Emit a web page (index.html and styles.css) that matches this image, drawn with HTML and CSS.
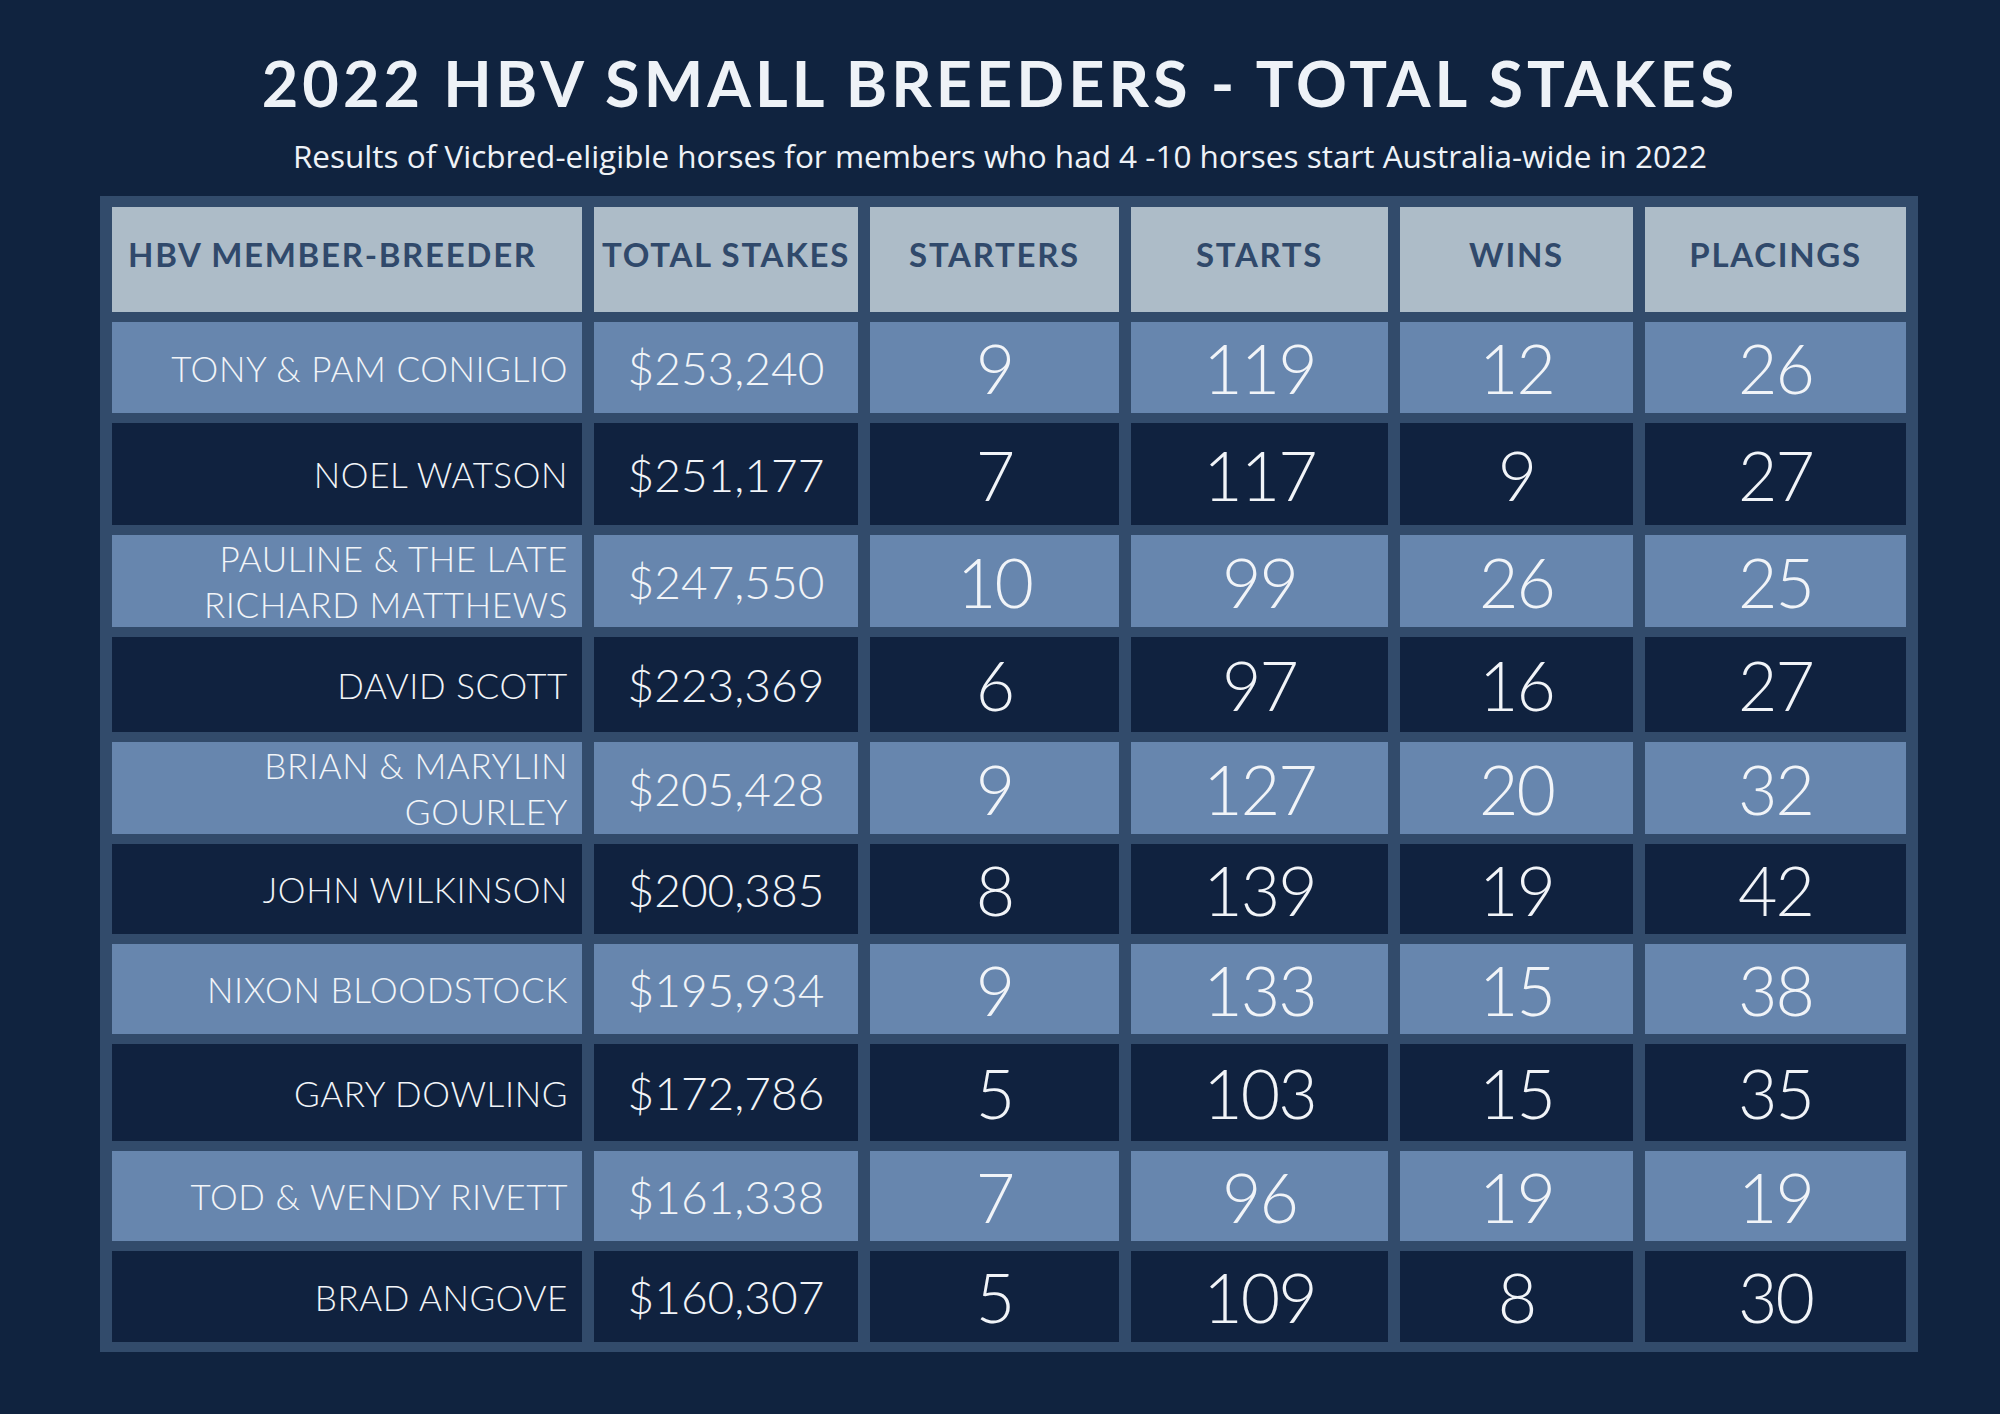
FILE: index.html
```html
<!DOCTYPE html>
<html lang="en">
<head>
<meta charset="utf-8">
<title>2022 HBV Small Breeders - Total Stakes</title>
<link rel="stylesheet" href="styles.css">
</head>
<body>
<div class="page">
  <h1 class="title">2022 HBV SMALL BREEDERS - TOTAL STAKES</h1>
  <p class="subtitle">Results of Vicbred-eligible horses for members who had 4 -10 horses start Australia-wide in 2022</p>
  <div class="table">
    <div class="cell head head-name">HBV MEMBER-BREEDER</div>
    <div class="cell head">TOTAL STAKES</div>
    <div class="cell head">STARTERS</div>
    <div class="cell head">STARTS</div>
    <div class="cell head">WINS</div>
    <div class="cell head">PLACINGS</div>

    <div class="cell light name">TONY &amp; PAM CONIGLIO</div>
    <div class="cell light money">$253,240</div>
    <div class="cell light num">9</div>
    <div class="cell light num">119</div>
    <div class="cell light num">12</div>
    <div class="cell light num">26</div>

    <div class="cell dark name">NOEL WATSON</div>
    <div class="cell dark money">$251,177</div>
    <div class="cell dark num">7</div>
    <div class="cell dark num">117</div>
    <div class="cell dark num">9</div>
    <div class="cell dark num">27</div>

    <div class="cell light name">PAULINE &amp; THE LATE<br>RICHARD MATTHEWS</div>
    <div class="cell light money">$247,550</div>
    <div class="cell light num">10</div>
    <div class="cell light num">99</div>
    <div class="cell light num">26</div>
    <div class="cell light num">25</div>

    <div class="cell dark name">DAVID SCOTT</div>
    <div class="cell dark money">$223,369</div>
    <div class="cell dark num">6</div>
    <div class="cell dark num">97</div>
    <div class="cell dark num">16</div>
    <div class="cell dark num">27</div>

    <div class="cell light name">BRIAN &amp; MARYLIN<br>GOURLEY</div>
    <div class="cell light money">$205,428</div>
    <div class="cell light num">9</div>
    <div class="cell light num">127</div>
    <div class="cell light num">20</div>
    <div class="cell light num">32</div>

    <div class="cell dark name">JOHN WILKINSON</div>
    <div class="cell dark money">$200,385</div>
    <div class="cell dark num">8</div>
    <div class="cell dark num">139</div>
    <div class="cell dark num">19</div>
    <div class="cell dark num">42</div>

    <div class="cell light name">NIXON BLOODSTOCK</div>
    <div class="cell light money">$195,934</div>
    <div class="cell light num">9</div>
    <div class="cell light num">133</div>
    <div class="cell light num">15</div>
    <div class="cell light num">38</div>

    <div class="cell dark name">GARY DOWLING</div>
    <div class="cell dark money">$172,786</div>
    <div class="cell dark num">5</div>
    <div class="cell dark num">103</div>
    <div class="cell dark num">15</div>
    <div class="cell dark num">35</div>

    <div class="cell light name">TOD &amp; WENDY RIVETT</div>
    <div class="cell light money">$161,338</div>
    <div class="cell light num">7</div>
    <div class="cell light num">96</div>
    <div class="cell light num">19</div>
    <div class="cell light num">19</div>

    <div class="cell dark name">BRAD ANGOVE</div>
    <div class="cell dark money">$160,307</div>
    <div class="cell dark num">5</div>
    <div class="cell dark num">109</div>
    <div class="cell dark num">8</div>
    <div class="cell dark num">30</div>
  </div>
</div>
</body>
</html>
```

FILE: styles.css
```css
* { box-sizing: border-box; }

html, body {
  margin: 0;
  padding: 0;
  background: #10233f;
}

.page {
  width: 2000px;
  height: 1414px;
  background: #10233f;
  padding-top: 45px;
  overflow: hidden;
}

.title {
  margin: 0;
  text-align: center;
  font-family: "Lato", "Noto Sans", sans-serif;
  font-weight: 700;
  font-size: 63px;
  line-height: 76px;
  color: #eef2f7;
  letter-spacing: 4px;
}

.subtitle {
  margin: 15px 0 0 0;
  text-align: center;
  font-family: "Open Sans", "Noto Sans", sans-serif;
  font-weight: 400;
  font-size: 31.5px;
  line-height: 40px;
  color: #eef2f7;
}

.table {
  margin: 20px 0 0 100px;
  width: 1818px;
  padding: 11px 12px 10px 12px;
  background: #324b6b;
  display: grid;
  grid-template-columns: 470px 264px 249px 257px 233px 261px;
  grid-template-rows: 105px 91px 102px 92px 95px 92px 90px 90px 97px 90px 91px;
  column-gap: 12px;
  row-gap: 10px;
}

.cell {
  display: flex;
  align-items: center;
  justify-content: center;
  font-family: "Lato", "Noto Sans", sans-serif;
  color: #f1f4f8;
  text-align: center;
}

.head {
  background: #adbcc8;
  color: #30496b;
  font-weight: 700;
  font-size: 33px;
  letter-spacing: 1.7px;
  padding-bottom: 12px;
}

.head-name {
  justify-content: flex-start;
  padding-left: 16px;
}

.light { background: #6786ae; }
.dark { background: #10223f; }

.name {
  justify-content: flex-end;
  text-align: right;
  padding-right: 14px;
  font-weight: 300;
  font-size: 35px;
  line-height: 46px;
  letter-spacing: 0.6px;
}

.money {
  font-weight: 300;
  font-size: 46px;
}

.num {
  font-weight: 300;
  font-size: 68px;
  letter-spacing: -2px;
}
```
